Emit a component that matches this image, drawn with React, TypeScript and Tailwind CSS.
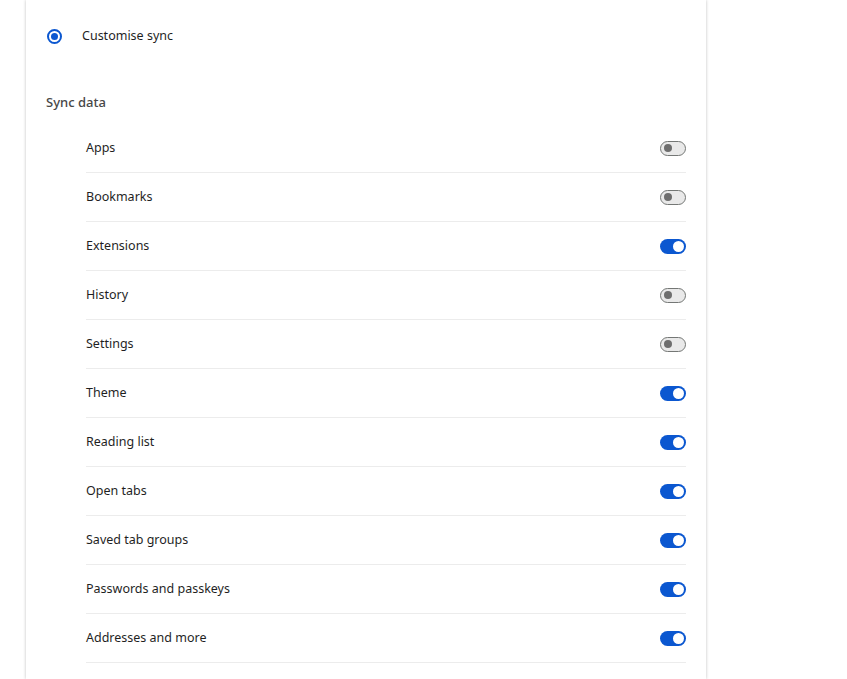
import { useState } from 'react';

const items = [
  { label: 'Apps', on: false },
  { label: 'Bookmarks', on: false },
  { label: 'Extensions', on: true },
  { label: 'History', on: false },
  { label: 'Settings', on: false },
  { label: 'Theme', on: true },
  { label: 'Reading list', on: true },
  { label: 'Open tabs', on: true },
  { label: 'Saved tab groups', on: true },
  { label: 'Passwords and passkeys', on: true },
  { label: 'Addresses and more', on: true },
];

function Toggle({ on, onClick }: { on: boolean; onClick: () => void }) {
  if (on) {
    return (
      <button
        onClick={onClick}
        className="flex h-[15px] w-[26px] items-center justify-end rounded-full bg-[#0b57d0] pr-[2px]"
      >
        <span className="h-[11px] w-[11px] rounded-full bg-white" />
      </button>
    );
  }
  return (
    <button
      onClick={onClick}
      className="flex h-[15px] w-[26px] items-center rounded-full border border-[#747775] bg-[#e9e9e9] pl-[3px]"
    >
      <span className="h-[8px] w-[8px] rounded-full bg-[#6e6e6e]" />
    </button>
  );
}

export default function App() {
  const [state, setState] = useState(items.map((i) => i.on));

  return (
    <div className="min-h-screen bg-white" style={{ fontFamily: '"Noto Sans", "Open Sans", sans-serif' }}>
      <div className="ml-[26px] min-h-screen w-[680px] bg-white pt-[12px] shadow-[0_0_3px_rgba(0,0,0,0.25)]">
        {/* sync mode */}
        <div className="flex h-[48px] items-center pl-[21px]">
          <span className="flex h-[15px] w-[15px] items-center justify-center rounded-full border-2 border-[#0b57d0]">
            <span className="h-[7px] w-[7px] rounded-full bg-[#0b57d0]" />
          </span>
          <span className="ml-[20px] pt-[1px] text-[12.5px] text-[#1f1f1f]">Customise sync</span>
        </div>

        <div className="mt-[32px] pl-[20px] text-[13px] font-medium leading-[20px] text-[#474747]">Sync data</div>

        <div className="mt-[12px] ml-[60px] mr-[20px]">
          {items.map((item, idx) => (
            <div key={item.label} className="flex h-[49px] items-center justify-between border-b border-[#ececec]">
              <span className="pt-[1px] text-[12.5px] text-[#1f1f1f]">{item.label}</span>
              <Toggle
                on={state[idx]}
                onClick={() => setState((s) => s.map((v, i) => (i === idx ? !v : v)))}
              />
            </div>
          ))}
        </div>
      </div>
    </div>
  );
}
